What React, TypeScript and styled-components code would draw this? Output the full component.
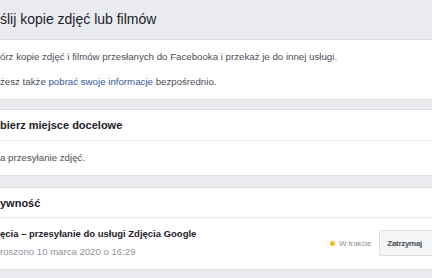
import React from "react";
import styled, { createGlobalStyle } from "styled-components";

const Global = createGlobalStyle`
  html, body { margin: 0; padding: 0; background: #e9ebee; }
  body { font-family: "Liberation Sans", Arial, Helvetica, sans-serif; overflow: hidden; }
  * { box-sizing: border-box; }
`;

const Page = styled.div`
  width: 432px;
  height: 278px;
  background: #e9ebee;
  overflow: hidden;
  display: flex;
  flex-direction: column;
`;

const PageTitle = styled.h1`
  margin: 0;
  height: 39px;
  line-height: 39px;
  font-size: 14px;
  font-weight: normal;
  color: #1d2129;
  white-space: nowrap;
`;

const Card = styled.section<{ $gap?: number }>`
  background: #fff;
  border-top: 1px solid #dddfe2;
  border-bottom: 1px solid #dddfe2;
  margin-bottom: ${(p) => p.$gap ?? 10}px;
`;

const CardHeader = styled.h2<{ $h: number }>`
  margin: 0;
  height: ${(p) => p.$h}px;
  display: flex;
  align-items: center;
  font-size: 11px;
  font-weight: bold;
  color: #1d2129;
  border-bottom: 1px solid #e9ebee;
  white-space: nowrap;
`;

const CardBody = styled.div<{ $pt: number; $pb: number }>`
  padding: ${(p) => p.$pt}px 0 ${(p) => p.$pb}px 0;
  display: flex;
  flex-direction: column;
  gap: 13px;
`;

const Text = styled.p`
  margin: 0;
  font-size: 9.7px;
  line-height: 12px;
  color: #4b4f56;
  white-space: nowrap;
`;

const Link = styled.a`
  color: #365899;
  text-decoration: none;
`;

const Row = styled.div`
  display: flex;
  align-items: center;
  justify-content: space-between;
  padding: 10px 0 11px 0;
`;

const RowInfo = styled.div`
  display: flex;
  flex-direction: column;
  gap: 6px;
`;

const RowTitle = styled.div`
  font-size: 9.5px;
  line-height: 12px;
  font-weight: bold;
  color: #1d2129;
  white-space: nowrap;
`;

const RowMeta = styled.div`
  font-size: 9.6px;
  line-height: 12px;
  color: #90949c;
  white-space: nowrap;
`;

const Actions = styled.div`
  display: flex;
  align-items: center;
  margin-right: -8px;
`;

const Status = styled.span`
  display: flex;
  align-items: center;
  gap: 4px;
  font-size: 8px;
  letter-spacing: -0.1px;
  color: #90949c;
  margin-right: 8px;
`;

const Dot = styled.span`
  width: 5px;
  height: 5px;
  border-radius: 50%;
  background: #f7b928;
`;

const Button = styled.button`
  height: 26px;
  padding: 0 17px 0 7px;
  background: #f5f6f7;
  border: 1px solid #dddfe2;
  border-radius: 2px;
  font-family: inherit;
  font-size: 8px;
  letter-spacing: -0.3px;
  font-weight: bold;
  color: #4b4f56;
`;

export default function App() {
  return (
    <>
      <Global />
      <Page>
        <PageTitle>ślij kopie zdjęć lub filmów</PageTitle>
        <Card $gap={9}>
          <CardBody $pt={11} $pb={11}>
            <Text>órz kopie zdjęć i filmów przesłanych do Facebooka i przekaż je do innej usługi.</Text>
            <Text>
              żesz także <Link href="#">pobrać swoje informacje</Link> bezpośrednio.
            </Text>
          </CardBody>
        </Card>
        <Card $gap={11}>
          <CardHeader $h={31}>bierz miejsce docelowe</CardHeader>
          <CardBody $pt={11} $pb={11}>
            <Text>a przesyłanie zdjęć.</Text>
          </CardBody>
        </Card>
        <Card>
          <CardHeader $h={30}>ywność</CardHeader>
          <Row>
            <RowInfo>
              <RowTitle>ęcia – przesyłanie do usługi Zdjęcia Google</RowTitle>
              <RowMeta>roszono 10 marca 2020 o 16:29</RowMeta>
            </RowInfo>
            <Actions>
              <Status>
                <Dot />W trakcie
              </Status>
              <Button>Zatrzymaj</Button>
            </Actions>
          </Row>
        </Card>
      </Page>
    </>
  );
}
